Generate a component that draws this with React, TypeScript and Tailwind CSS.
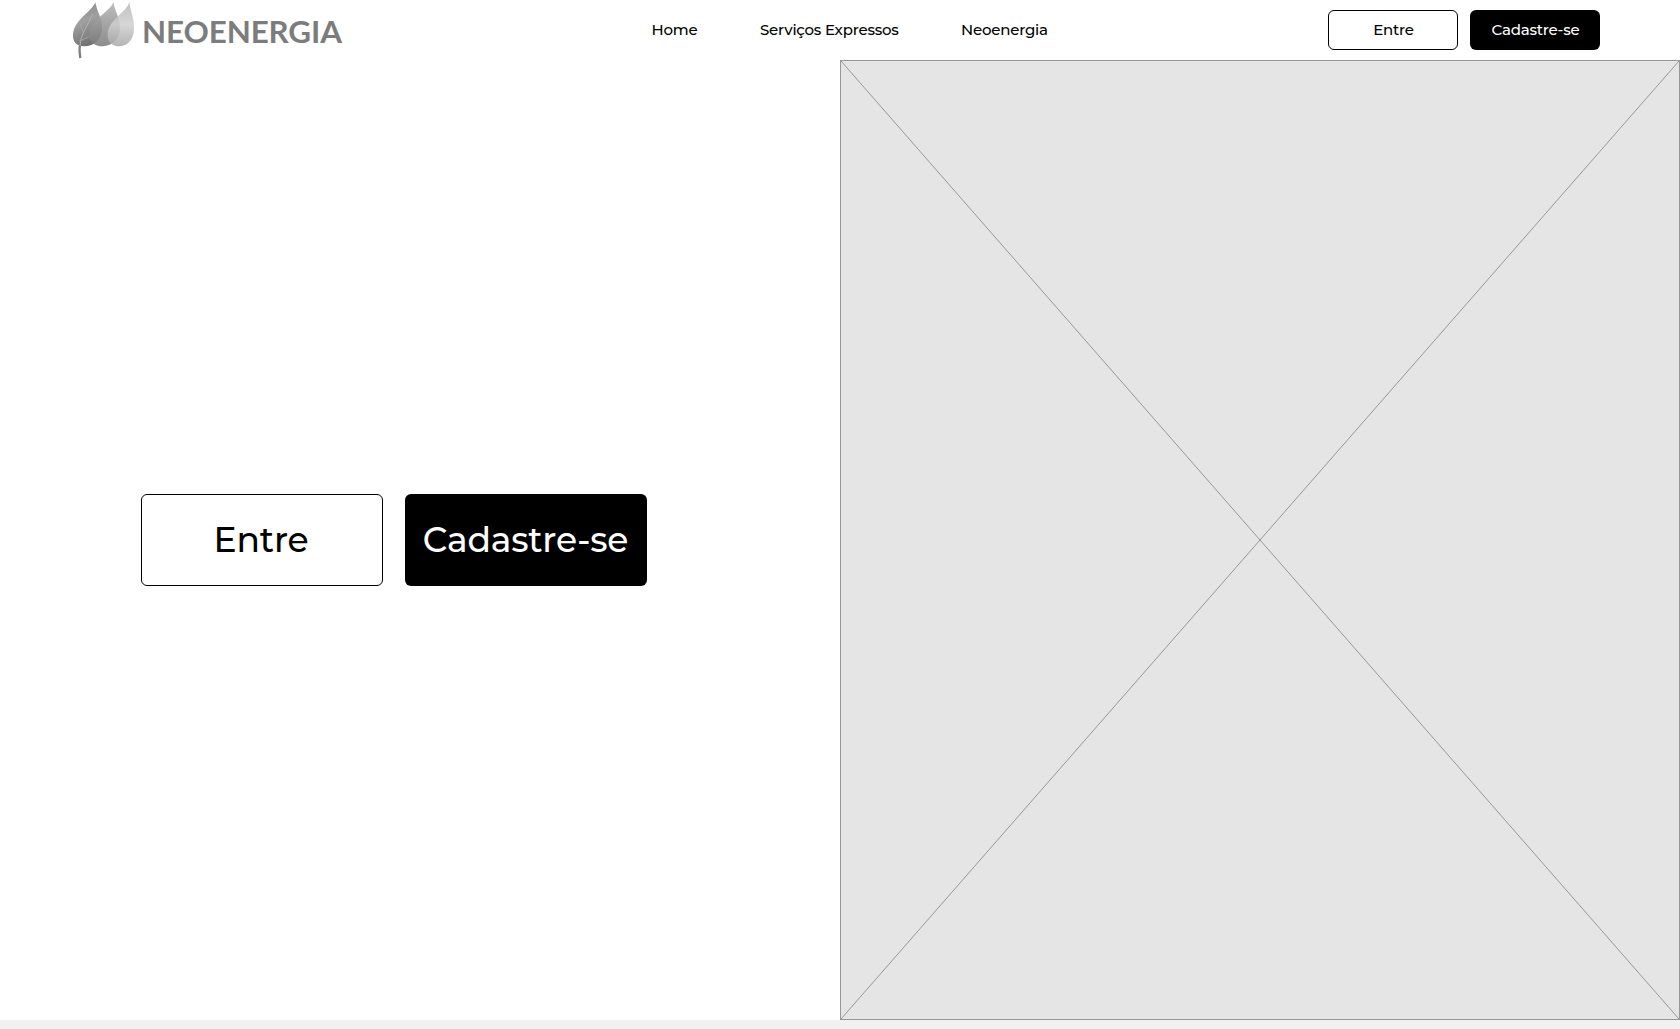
function LeafLogo() {
  return (
    <svg className="h-[60px] w-[78px] shrink-0" viewBox="0 0 234 180" aria-hidden="true">
      <defs>
        <linearGradient id="leafA" x1="0" y1="0" x2="0.3" y2="1">
          <stop offset="0" stopColor="#858585" />
          <stop offset="0.5" stopColor="#a0a0a0" />
          <stop offset="1" stopColor="#747474" />
        </linearGradient>
        <linearGradient id="leafB" x1="0" y1="0" x2="0" y2="1">
          <stop offset="0" stopColor="#b4b4b4" />
          <stop offset="1" stopColor="#7d7d7d" />
        </linearGradient>
        <linearGradient id="leafC" x1="0" y1="0" x2="0" y2="1">
          <stop offset="0" stopColor="#b4b4b4" />
          <stop offset="0.5" stopColor="#d0d0d0" />
          <stop offset="1" stopColor="#a8a8a8" />
        </linearGradient>
      </defs>
      <path d="M106 6C98 34 44 56 39 103C37 126 51 139 72 139C104 139 126 116 126 83C126 50 111 37 106 6Z" fill="url(#leafA)" />
      <path d="M160 6C153 34 91 58 88 102C87 126 103 139 128 139C158 137 180 116 180 84C180 52 165 36 160 6Z" fill="url(#leafB)" fillOpacity="0.88" />
      <path d="M208 6C202 35 146 58 143 101C142 126 156 139 178 139C206 137 222 116 222 84C222 52 212 38 208 6Z" fill="url(#leafC)" fillOpacity="0.86" />
      <path d="M60 136C57 148 59 160 61 174" fill="none" stroke="#7e7e7e" strokeWidth="7" />
      <path d="M97 42C85 76 61 102 60 138" fill="none" stroke="#b2b2b2" strokeWidth="3" />
      <path d="M60 70L70 98M57 124L87 110" fill="none" stroke="#b0b0b0" strokeWidth="2" />
    </svg>
  );
}

export default function App() {
  return (
    <div className="flex h-[1029px] w-[1680px] flex-col overflow-hidden bg-[#f1f1f1] font-['Montserrat','Inter',sans-serif] font-medium text-black">
      <header className="flex h-[60px] shrink-0 items-center bg-white">
        <div className="flex h-full w-[651.5px] items-center pl-[60px]">
          <LeafLogo />
          <span className="ml-[4px] mt-[2px] origin-left scale-x-[1.045] whitespace-nowrap font-['Lato',sans-serif] text-[30px] font-bold leading-none tracking-[-0.1px] text-[#7c7c7c]">
            NEOENERGIA
          </span>
        </div>
        <nav className="flex h-full items-center whitespace-nowrap text-[15px] tracking-[-0.22px]">
          <a className="w-[108.5px]">Home</a>
          <a className="w-[201px]">Serviços Expressos</a>
          <a className="w-[100px]">Neoenergia</a>
        </nav>
        <div className="ml-auto mr-[80px] flex gap-3 text-[15px] tracking-[-0.22px]">
          <button className="h-10 w-[130px] rounded-md border border-black bg-white pl-px">Entre</button>
          <button className="h-10 w-[130px] rounded-md bg-black pl-px text-white">Cadastre-se</button>
        </div>
      </header>
      <main className="flex h-[960px] shrink-0">
        <section className="flex w-[840px] items-center gap-[22px] bg-white pl-[141px] text-[34.5px] tracking-[-0.2px]">
          <button className="h-[92px] w-[242px] rounded-md border border-black bg-white pr-[2px] pt-[2px]">Entre</button>
          <button className="h-[92px] w-[242px] rounded-md bg-black pr-px pt-[2px] text-white">Cadastre-se</button>
        </section>
        <section className="w-[840px] border border-[#979797] bg-[#e5e5e5]">
          <svg className="block h-full w-full" viewBox="0 0 838 958" preserveAspectRatio="none" aria-hidden="true">
            <path d="M0 0L838 958M838 0L0 958" stroke="#979797" strokeWidth="1" />
          </svg>
        </section>
      </main>
    </div>
  );
}
